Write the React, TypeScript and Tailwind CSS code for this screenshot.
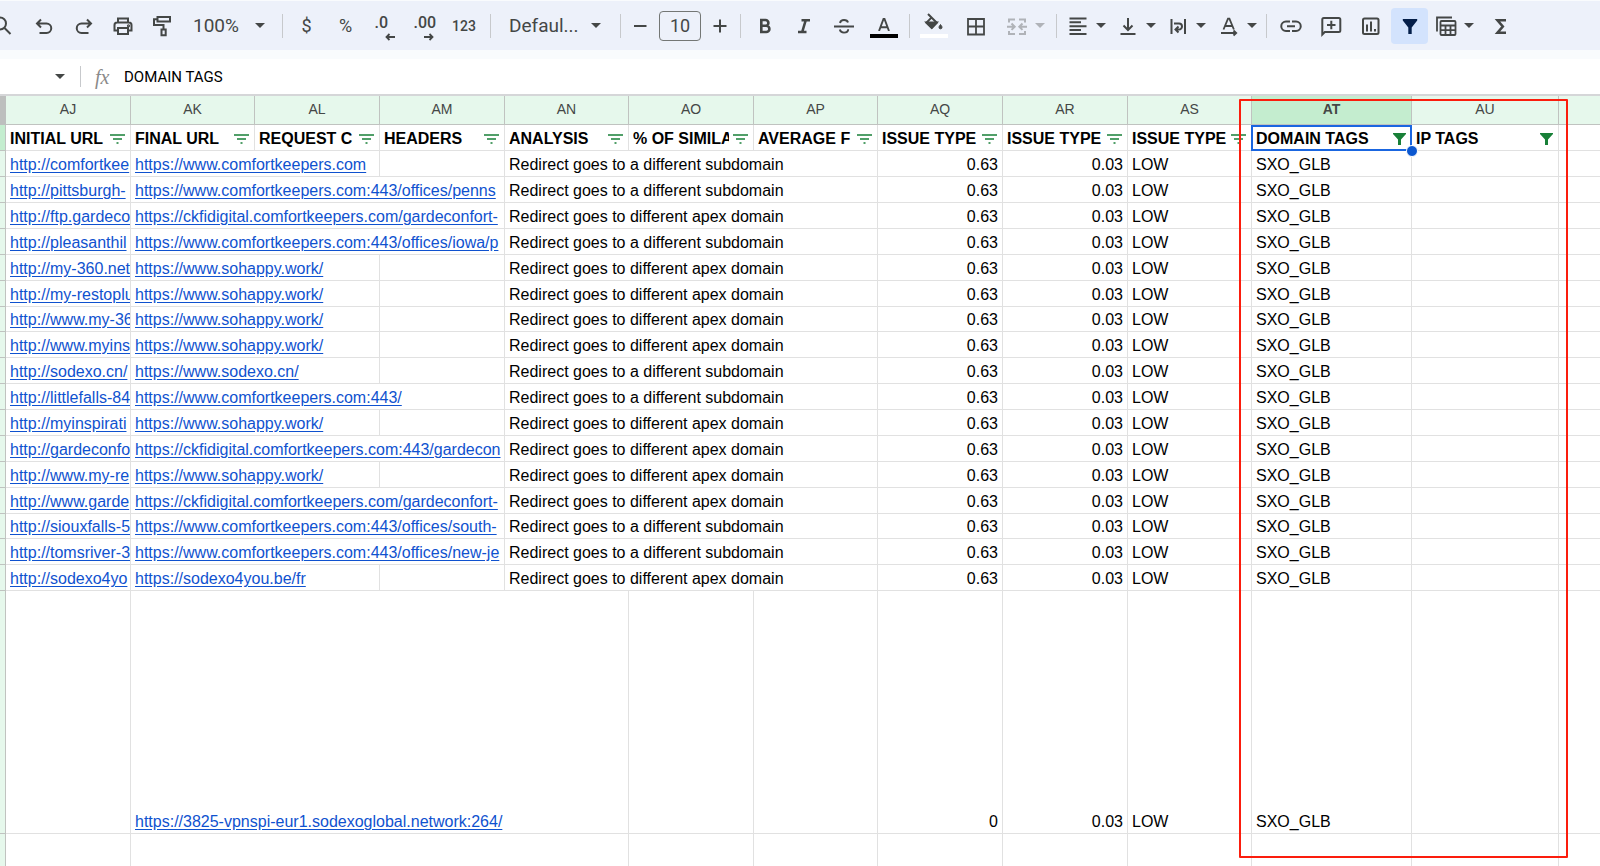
import { ReactNode, useState } from 'react'

type Row = { initial: string; final: string; span: 2 | 3; apex: boolean; height?: string }

const ROWS: Row[] = [
  { initial: 'http://comfortkee', final: 'https://www.comfortkeepers.com', span: 2, apex: false },
  { initial: 'http://pittsburgh-', final: 'https://www.comfortkeepers.com:443/offices/penns', span: 3, apex: false },
  { initial: 'http://ftp.gardeco', final: 'https://ckfidigital.comfortkeepers.com/gardeconfort-', span: 3, apex: true },
  { initial: 'http://pleasanthil', final: 'https://www.comfortkeepers.com:443/offices/iowa/p', span: 3, apex: false },
  { initial: 'http://my-360.net', final: 'https://www.sohappy.work/', span: 2, apex: true },
  { initial: 'http://my-restoplu', final: 'https://www.sohappy.work/', span: 2, apex: true },
  { initial: 'http://www.my-36', final: 'https://www.sohappy.work/', span: 2, apex: true, height: 'h-[25px]' },
  { initial: 'http://www.myins', final: 'https://www.sohappy.work/', span: 2, apex: true },
  { initial: 'http://sodexo.cn/', final: 'https://www.sodexo.cn/', span: 2, apex: false },
  { initial: 'http://littlefalls-84', final: 'https://www.comfortkeepers.com:443/', span: 3, apex: false },
  { initial: 'http://myinspirati', final: 'https://www.sohappy.work/', span: 2, apex: true },
  { initial: 'http://gardeconfo', final: 'https://ckfidigital.comfortkeepers.com:443/gardecon', span: 3, apex: true },
  { initial: 'http://www.my-re', final: 'https://www.sohappy.work/', span: 2, apex: true },
  { initial: 'http://www.garde', final: 'https://ckfidigital.comfortkeepers.com/gardeconfort-', span: 3, apex: true },
  { initial: 'http://siouxfalls-5', final: 'https://www.comfortkeepers.com:443/offices/south-', span: 3, apex: false, height: 'h-[25px]' },
  { initial: 'http://tomsriver-3', final: 'https://www.comfortkeepers.com:443/offices/new-je', span: 3, apex: false },
  { initial: 'http://sodexo4yo', final: 'https://sodexo4you.be/fr', span: 2, apex: true },
]

const COLUMNS = [
  { letter: 'AJ', title: 'INITIAL URL', width: 'w-[125px]' },
  { letter: 'AK', title: 'FINAL URL', width: 'w-[124px]' },
  { letter: 'AL', title: 'REQUEST C', width: 'w-[125px]' },
  { letter: 'AM', title: 'HEADERS', width: 'w-[125px]' },
  { letter: 'AN', title: 'ANALYSIS', width: 'w-[124px]' },
  { letter: 'AO', title: '% OF SIMILA', width: 'w-[125px]' },
  { letter: 'AP', title: 'AVERAGE F', width: 'w-[124px]' },
  { letter: 'AQ', title: 'ISSUE TYPE', width: 'w-[125px]' },
  { letter: 'AR', title: 'ISSUE TYPE', width: 'w-[125px]' },
  { letter: 'AS', title: 'ISSUE TYPE', width: 'w-[124px]' },
  { letter: 'AT', title: 'DOMAIN TAGS', width: 'w-[160px]', filtered: true, selected: true },
  { letter: 'AU', title: 'IP TAGS', width: 'w-[147px]', filtered: true },
]

const CELL = 'border-r border-b border-[#e1e1e1] px-1 pb-px align-bottom overflow-hidden whitespace-nowrap'
const LAST = 'border-b border-[#e1e1e1] p-0'
const GUTTER = 'border-r border-b border-[#c0c3c0] bg-[#e6f8ec] p-0'
const LINK = 'text-[#0f52cf] underline underline-offset-2'

function Icon({ children, stroke = 2 }: { children: ReactNode; stroke?: number }) {
  return (
    <svg className="w-6 h-6 shrink-0" viewBox="0 0 24 24" fill="none" stroke="currentColor" strokeWidth={stroke} aria-hidden="true">
      {children}
    </svg>
  )
}

function Caret() {
  return (
    <svg className="w-[10px] h-[5px] shrink-0 pointer-events-none" viewBox="0 0 10 5" fill="currentColor" aria-hidden="true">
      <path d="M0 0h10L5 5z" />
    </svg>
  )
}

function Sep() {
  return <div className="w-[10px] h-6 shrink-0 flex justify-center"><div className="w-px bg-[#c7c9cc]" /></div>
}

function Tool({ label, className = 'w-10', children }: { label: string; className?: string; children: ReactNode }) {
  return (
    <button type="button" aria-label={label} className={`${className} h-9 shrink-0 flex items-center justify-center rounded`}>
      {children}
    </button>
  )
}

function SplitTool({ label, className = 'w-[50px] pl-[5px]', children }: { label: string; className?: string; children: ReactNode }) {
  return (
    <button type="button" aria-label={label} className={`${className} h-9 shrink-0 flex items-center gap-[6px]`}>
      {children}
      <Caret />
    </button>
  )
}

function Toolbar() {
  const [size, setSize] = useState('10')

  return (
    <div className="h-[49px] bg-[#edf1fa] flex items-center overflow-hidden text-[#444746] font-[Roboto,sans-serif]">
      <div className="flex items-center -ml-[15px]">
        <Tool label="Search" className="w-[39px]">
          <Icon><circle cx="7" cy="9.500" r="6" /><path d="M11.500 14l6 6" /></Icon>
        </Tool>
        <Tool label="Undo" className="w-10">
          <Icon><path d="M9 5.500L5 9.500l4 4M5.500 9.500h9a4.700 4.700 0 0 1 0 9.500H7.500" /></Icon>
        </Tool>
        <Tool label="Redo" className="w-[39px]">
          <Icon><path d="M15 5.500l4 4-4 4M18.500 9.500h-9a4.700 4.700 0 0 0 0 9.500h7" /></Icon>
        </Tool>
        <Tool label="Print" className="w-[39px]">
          <Icon><path d="M7 8.500V4.500h10v4M7 16.500H3.500V11a2.500 2.500 0 0 1 2.500-2.500h12a2.500 2.500 0 0 1 2.500 2.500v5.500H17M7 14h10v6H7z" /><circle cx="17.500" cy="11.800" r=".6" /></Icon>
        </Tool>
        <Tool label="Paint format" className="w-[39px]">
          <Icon><path d="M7.500 3H20v4.500H7.500zM7.500 5.200H4V11h9.500v4M11.500 15.500h4.200v5.700h-4.200z" /></Icon>
        </Tool>
        <div className="relative flex items-center w-24 pl-3">
          <select aria-label="Zoom" className="appearance-none bg-transparent w-full text-[19px] leading-6 outline-none">
            <option>100%</option>
          </select>
          <div className="absolute right-3"><Caret /></div>
        </div>
        <Sep />
        <Tool label="Format as currency" className="w-[39px]"><span className="text-[18px] leading-6">$</span></Tool>
        <Tool label="Format as percent" className="w-[39px]"><span className="text-[18px] leading-6">%</span></Tool>
        <Tool label="Decrease decimal places" className="w-[39px]">
          <span className="relative text-[16px] font-medium leading-6 w-5 pb-[6px] text-left">
            .0
            <svg className="absolute right-0 bottom-0 w-[10px] h-[8px]" viewBox="0 0 10 8" fill="none" stroke="currentColor" strokeWidth="1.800"><path d="M10 4H1.500M4.500 1l-3 3 3 3" /></svg>
          </span>
        </Tool>
        <Tool label="Increase decimal places" className="w-[39px]">
          <span className="relative text-[16px] font-medium leading-6 w-5 pb-[6px] text-left">
            .00
            <svg className="absolute right-0 bottom-0 w-[10px] h-[8px]" viewBox="0 0 10 8" fill="none" stroke="currentColor" strokeWidth="1.800"><path d="M0 4h8.500M5.500 1l3 3-3 3" /></svg>
          </span>
        </Tool>
        <Tool label="More formats" className="w-[42px]"><span className="text-[14px] font-medium leading-6">123</span></Tool>
        <Sep />
        <div className="relative flex items-center w-[120px] pl-[14px]">
          <select aria-label="Font" className="appearance-none bg-transparent w-full text-[19px] leading-6 outline-none">
            <option>Defaul...</option>
          </select>
          <div className="absolute right-[14px]"><Caret /></div>
        </div>
        <Sep />
        <Tool label="Decrease font size" className="w-[30px]"><Icon><path d="M6 12h12.500" /></Icon></Tool>
        <input
          aria-label="Font size"
          value={size}
          onChange={(e) => setSize(e.target.value)}
          className="w-[42px] h-[30px] mx-1 rounded border border-[#747775] bg-transparent text-center text-[18px] leading-6 outline-none"
        />
        <Tool label="Increase font size" className="w-[30px]"><Icon><path d="M5.500 12h13M12 5.500v13" /></Icon></Tool>
        <Sep />
        <Tool label="Bold" className="w-[39px]">
          <Icon stroke={2.600}><path d="M8.300 6h4.200a2.900 2.900 0 0 1 0 5.800H8.300zM8.300 11.800h5a3.100 3.100 0 0 1 0 6.200h-5z" /></Icon>
        </Tool>
        <Tool label="Italic">
          <Icon stroke={2.600}><path d="M9.500 6.300h8.500M6 18h8.500M13.800 6l-3.600 12" /></Icon>
        </Tool>
        <Tool label="Strikethrough">
          <Icon stroke={1.900}><path d="M2 12.500h20M8 9c.4-2 1.700-3 4-3 2.200 0 3.600 1 4 2.600M7.800 15.500c.5 2.100 1.900 3.100 4.200 3.100 2.600 0 4.200-1.200 4.200-3.300" /></Icon>
        </Tool>
        <Tool label="Text color">
          <span className="w-[28px] h-6 flex flex-col items-center justify-end gap-[3px]">
            <svg className="w-3 h-[13px]" viewBox="0 0 12 13" fill="none" stroke="currentColor" strokeWidth="1.900"><path d="M1 13L5.500 1h1L11 13M2.600 9.200h6.800" /></svg>
            <span className="w-full h-1 bg-black" />
          </span>
        </Tool>
        <Sep />
        <Tool label="Fill color">
          <span className="w-[28px] h-6 flex flex-col items-center justify-end gap-[3px]">
            <svg className="w-5 h-[18px] shrink-0" viewBox="0 0 20 18" fill="none" stroke="currentColor" strokeWidth="2"><path d="M4 1l8.800 8.800-5 5L2.400 9.800l5-5.200" /><path d="M2.500 9.500h10.200l-5 5.200z" fill="currentColor" /><path d="M16.500 11.500c1 1.400 1.500 2 1.500 2.800a1.500 1.500 0 0 1-3 0c0-.8.5-1.400 1.500-2.800z" fill="currentColor" strokeWidth="1" /></svg>
            <span className="w-full h-1 shrink-0 bg-white" />
          </span>
        </Tool>
        <Tool label="Borders" className="w-11">
          <Icon stroke={1.800}><path d="M4 5h16v15.500H4zM12 5v15.500M4 12.500h16" /></Icon>
        </Tool>
        <SplitTool label="Merge cells" className="w-[53px] pl-[7px] text-[#b0b3b8]">
          <Icon><path d="M10 5.500H4v3M4 17v3h6M14 5.500h6v3M20 17v3h-6M2 12.700h7.500M6.500 9.500l3.200 3.200-3.200 3.200M22 12.700h-7.500M17.500 9.500l-3.200 3.200 3.200 3.200" /></Icon>
        </SplitTool>
        <Sep />
        <SplitTool label="Horizontal align">
          <Icon><path d="M3.500 4.500h17M3.500 8.300h11.500M3.500 12.200h17M3.500 16.100h11.500M3.500 20h17" /></Icon>
        </SplitTool>
        <SplitTool label="Vertical align">
          <Icon><path d="M12 4v11.500M7.500 11.500l4.500 4.500 4.500-4.500M4.500 20h15" /></Icon>
        </SplitTool>
        <SplitTool label="Text wrapping">
          <Icon><path d="M5.500 5v15M19 5v15M8 9.500h5a3 3 0 0 1 0 6h-3M12.500 12.500l-3 3 3 3" /></Icon>
        </SplitTool>
        <SplitTool label="Text rotation" className="w-[50px] pl-[6px]">
          <Icon><path d="M6.500 15.500L11 4.700h1.400l4.500 10.800M8 12h7.500M4 19h15M16.500 16.500L19.200 19l-2.700 2.500" strokeWidth="1.800" /></Icon>
        </SplitTool>
        <Sep />
        <Tool label="Insert link">
          <Icon><path d="M11 17H7a4.700 4.700 0 0 1 0-9.500h4M13 7.500h4a4.700 4.700 0 0 1 0 9.500h-4M8 12.200h8" /></Icon>
        </Tool>
        <Tool label="Insert comment">
          <Icon><path d="M3.300 20.500V5.500a1.500 1.500 0 0 1 1.500-1.500h15a1.500 1.500 0 0 1 1.500 1.500v11a1.500 1.500 0 0 1-1.500 1.500H5.800zM12.300 6.800v8.500M8 11h8.500" /></Icon>
        </Tool>
        <Tool label="Insert chart">
          <Icon><rect x="4" y="4.500" width="15.500" height="15.500" rx="1.500" /><path d="M8 10.500v7M12 7.500v10M16 15v2.500" /></Icon>
        </Tool>
        <Tool label="Remove filter" className="w-[37px] bg-[#d3e3fd] text-[#041e49]">
          <Icon><path d="M4.800 5h14.400v1.500L13.700 13.500V20h-3.400v-6.500L4.800 6.500z" fill="currentColor" stroke="none" /></Icon>
        </Tool>
        <SplitTool label="Table views" className="w-[51px] pl-[6px]">
          <Icon stroke={1.800}><path d="M3 17.500V3.500h15" /><rect x="6.500" y="7" width="15" height="14" rx="1" /><path d="M6.500 11.500h15M6.500 16.200h15M11.500 11.500V21M16.500 11.500V21" /></Icon>
        </SplitTool>
        <Tool label="Functions" className="w-11">
          <Icon stroke={2.600}><path d="M17 6.300H8.500l5.300 6.200-5.300 6.200H17" /></Icon>
        </Tool>
      </div>
    </div>
  )
}

function FormulaBar() {
  const [value, setValue] = useState('DOMAIN TAGS')

  return (
    <div className="h-[35px] bg-white flex items-center text-[#444746]">
      <button type="button" aria-label="Name box" className="w-[65px] h-6 flex items-center justify-end"><Caret /></button>
      <div className="ml-[15px] w-px h-[21px] bg-[#c7c9cc]" />
      <label htmlFor="formula" className="w-[43px] pl-[14px] text-[20px] leading-6 italic text-[#8a8a8a] font-['Liberation_Serif',serif]">fx</label>
      <input
        id="formula"
        value={value}
        onChange={(e) => setValue(e.target.value)}
        className="flex-1 text-[15px] leading-6 text-black outline-none font-[Roboto,sans-serif]"
      />
    </div>
  )
}

function FilterLines() {
  return (
    <svg className="w-[15px] h-[10px]" viewBox="0 0 15 10" aria-hidden="true">
      <path d="M0 1h15M3 5h9M6.500 9h2" stroke="#188038" strokeWidth="1.500" />
    </svg>
  )
}

function FilterFunnel() {
  return (
    <svg className="w-[13px] h-3" viewBox="0 0 13 12" aria-hidden="true">
      <path d="M0 0h13v1L8 6.500V12H5V6.500L0 1z" fill="#188038" />
    </svg>
  )
}

function Sheet() {
  return (
    <div className="relative overflow-hidden bg-white border-t-2 border-[#d5d6d8]">
      <table className="w-full table-fixed border-separate border-spacing-0 text-[16px] leading-5 text-black font-['Liberation_Sans',Arial,sans-serif]">
        <colgroup>
          <col className="w-[6px]" />
          {COLUMNS.map((col) => <col key={col.letter} className={col.width} />)}
          <col />
        </colgroup>
        <thead>
          <tr className="h-[29px]">
            <td className="bg-[#bdbfbe] border-r border-b border-[#bdbfbe] p-0" />
            {COLUMNS.map((col) => (
              <th
                key={col.letter}
                scope="col"
                className={`border-r border-b border-[#c0c3c0] p-0 pb-[2px] text-[14px] text-[#444746] ${
                  col.selected ? 'bg-[#c4edcf] font-bold' : 'bg-[#e6f8ec] font-normal'
                }`}
              >
                {col.letter}
              </th>
            ))}
            <td className="bg-[#e6f8ec] border-b border-[#c0c3c0] p-0" />
          </tr>
        </thead>
        <tbody>
          <tr className="h-[26px]">
            <td className="border-r border-b border-[#c0c3c0] bg-[#c4edcf] p-0" />
            {COLUMNS.map((col) => (
              <th key={col.letter} className="relative border-r border-b border-[#e1e1e1] p-0 pb-px pl-1 pr-[5px] text-left align-bottom">
                <div className="flex items-center justify-between">
                  <span className="flex-1 min-w-0 overflow-hidden whitespace-nowrap mr-1">{col.title}</span>
                  <button type="button" aria-label={`Filter ${col.letter}`} className="shrink-0">
                    {col.filtered ? <FilterFunnel /> : <FilterLines />}
                  </button>
                </div>
                {col.selected && (
                  <>
                    <div className="absolute -inset-x-px top-0 -bottom-px border-2 border-[#1a66e0] pointer-events-none" />
                    <div className="absolute z-10 -right-[7px] -bottom-[7px] w-3 h-3 rounded-full border border-white bg-[#0b57d0]" />
                  </>
                )}
              </th>
            ))}
            <td className={LAST} />
          </tr>
          {ROWS.map((row, i) => (
            <tr key={i} className={row.height ?? 'h-[26px]'}>
              <td className={GUTTER} />
              <td className={CELL}><a href={row.initial} className={LINK}>{row.initial}</a></td>
              <td className={CELL} colSpan={row.span}><a href={row.final} className={LINK}>{row.final}</a></td>
              {row.span === 2 && <td className={CELL} />}
              <td className={CELL} colSpan={3}>
                {row.apex ? 'Redirect goes to different apex domain' : 'Redirect goes to a different subdomain'}
              </td>
              <td className={`${CELL} text-right`}>0.63</td>
              <td className={`${CELL} text-right`}>0.03</td>
              <td className={CELL}>LOW</td>
              <td className={CELL}>SXO_GLB</td>
              <td className={CELL} />
              <td className={LAST} />
            </tr>
          ))}
          <tr className="h-[243px]">
            <td className={GUTTER} />
            <td className={CELL} />
            <td className={CELL} colSpan={4}>
              <a href="https://3825-vpnspi-eur1.sodexoglobal.network:264/" className={LINK}>
                https://3825-vpnspi-eur1.sodexoglobal.network:264/
              </a>
            </td>
            <td className={CELL} />
            <td className={CELL} />
            <td className={`${CELL} text-right`}>0</td>
            <td className={`${CELL} text-right`}>0.03</td>
            <td className={CELL}>LOW</td>
            <td className={CELL}>SXO_GLB</td>
            <td className={CELL} />
            <td className={LAST} />
          </tr>
          <tr className="h-8">
            <td className="border-r border-[#c0c3c0] bg-[#e6f8ec] p-0" />
            <td className="border-r border-[#e1e1e1]" />
            <td className="border-r border-[#e1e1e1]" colSpan={4} />
            {COLUMNS.slice(5).map((col) => <td key={col.letter} className="border-r border-[#e1e1e1]" />)}
          </tr>
        </tbody>
      </table>
      {/* red annotation around the two tag columns */}
      <div className="absolute left-[1239px] top-[3px] bottom-[8px] w-[329px] border-2 border-[#fb1d0d] rounded-[1px] pointer-events-none" />
    </div>
  )
}

export default function App() {
  return (
    <main className="bg-[#f9fbfd] pt-px">
      <Toolbar />
      <div className="pt-[9px]">
        <FormulaBar />
        <Sheet />
      </div>
    </main>
  )
}
